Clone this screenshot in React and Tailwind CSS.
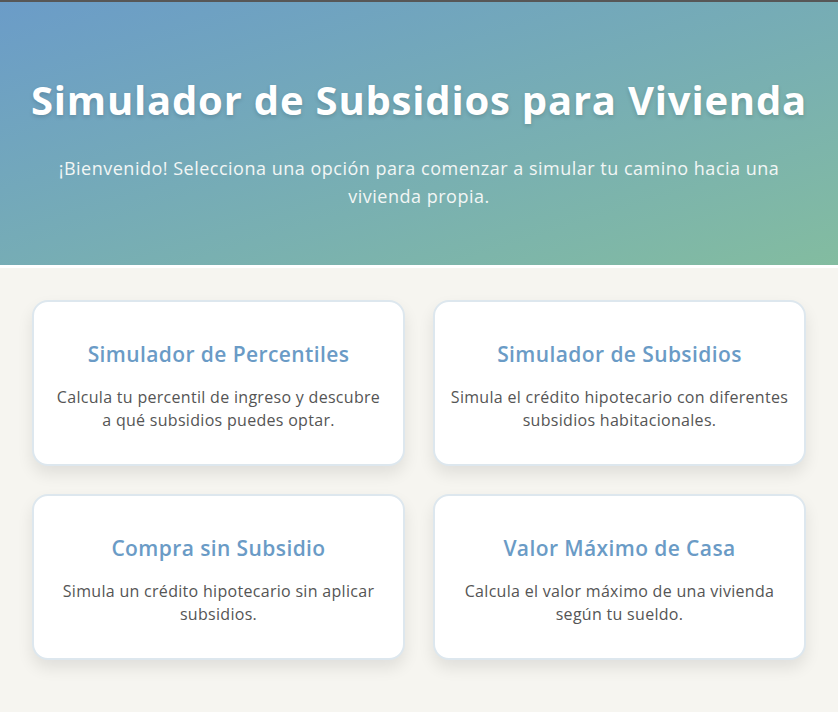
import React from 'react'

const cards = [
  { title: 'Simulador de Percentiles', text: 'Calcula tu percentil de ingreso y descubre a qué subsidios puedes optar.', w: 'max-w-[330px]' },
  { title: 'Simulador de Subsidios', text: 'Simula el crédito hipotecario con diferentes subsidios habitacionales.', w: 'max-w-[350px]' },
  { title: 'Compra sin Subsidio', text: 'Simula un crédito hipotecario sin aplicar subsidios.', w: 'max-w-[350px]' },
  { title: 'Valor Máximo de Casa', text: 'Calcula el valor máximo de una vivienda según tu sueldo.', w: 'max-w-[350px]' },
]

function Card({ title, text, w }) {
  return (
    <div className="flex h-[166px] flex-col items-center justify-center rounded-2xl border-2 border-[#dde7ee] bg-white px-3 pt-[6px] text-center shadow-[0_8px_16px_rgba(0,0,0,0.09)]">
      <h2 className="text-[21px] font-semibold leading-7 tracking-[0.4px] text-[#6a9bc6]">{title}</h2>
      <p className={`mt-[18px] ${w} text-[16px] leading-[23px] tracking-[0.3px] text-[#555]`}>{text}</p>
    </div>
  )
}

export default function App() {
  return (
    <div className="min-h-[712px] bg-[#f6f5f0] font-['Open_Sans',sans-serif]">
      <header className="h-[265px] border-t-2 border-[#575757] bg-gradient-to-br from-[#6b9cc8] to-[#83bca0] px-6 pt-[70px] text-center">
        <h1 className="text-[40px] font-bold leading-[56px] tracking-[0.8px] text-white [text-shadow:0_2px_4px_rgba(0,0,0,0.15)]">
          Simulador de Subsidios para Vivienda
        </h1>
        <p className="mx-auto mt-[26px] max-w-[740px] text-[18px] leading-[28px] tracking-[0.5px] text-[#f2f6f5]">
          ¡Bienvenido! Selecciona una opción para comenzar a simular tu camino hacia una vivienda propia.
        </p>
      </header>
      <div className="h-[3px] bg-white" />
      <main className="grid grid-cols-2 gap-7 px-8 pt-8 pb-12">
        {cards.map((c) => (
          <Card key={c.title} {...c} />
        ))}
      </main>
    </div>
  )
}
